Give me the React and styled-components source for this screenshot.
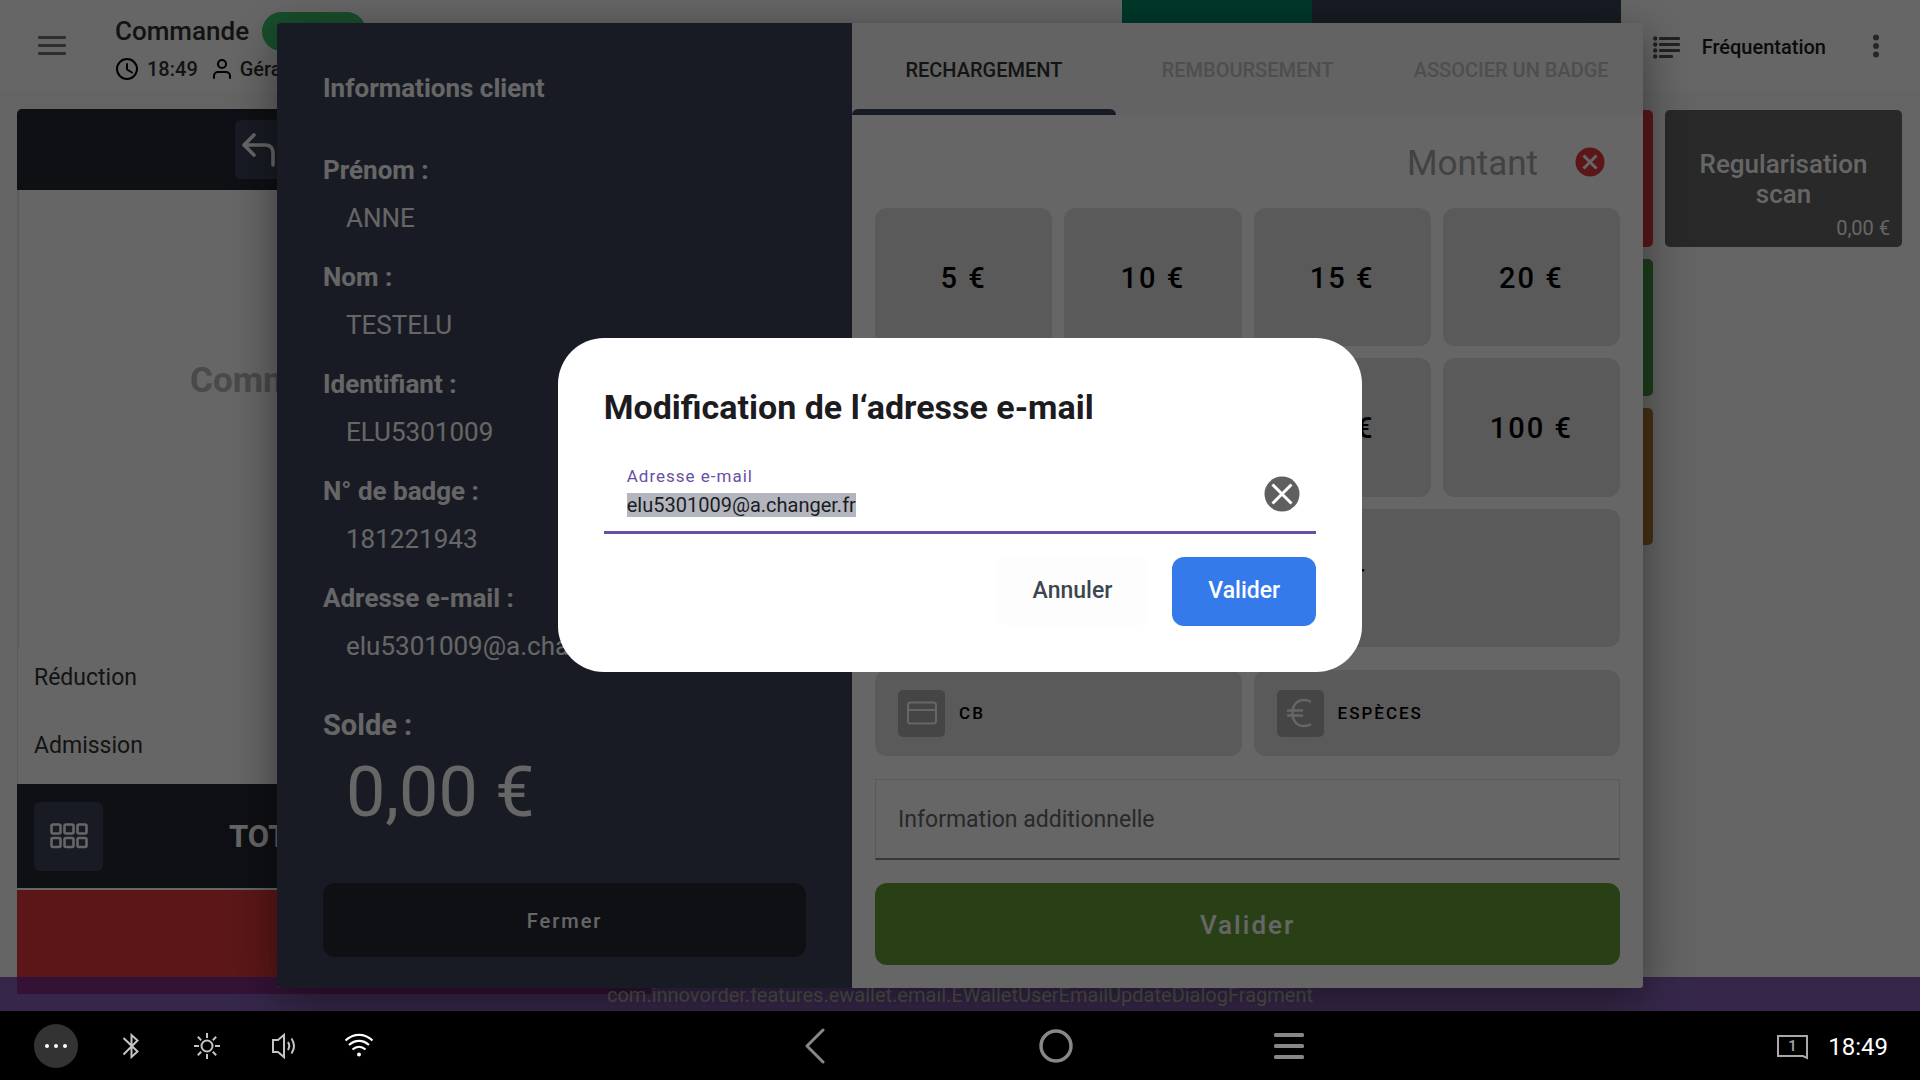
import React from 'react';
import styled, { createGlobalStyle } from 'styled-components';


const GlobalStyle = createGlobalStyle`
  * {
    box-sizing: border-box;
  }

  body {
    margin: 0;
    background-color: black;
    font-family: Roboto, 'Liberation Sans', sans-serif;
  }

  button, input {
    font-family: inherit;
    border: none;
    margin: 0;
    padding: 0;
    background: none;
  }

  svg {
    display: block;
    flex-shrink: 0;
  }
`;

const Page = styled.div`
  min-height: 100vh;
  display: flex;
  flex-direction: column;
`;

const AppArea = styled.div`
  position: relative;
  flex: 1;
  display: flex;
  flex-direction: column;
  overflow: hidden;
  background-color: #f9f9f9;
`;

const Header = styled.header`
  height: 92px;
  display: flex;
  background-color: white;
`;

const MenuButton = styled.button`
  width: 104px;
  display: flex;
  align-items: center;
  padding-left: 38px;
`;

const OrderInfo = styled.div`
  flex: 1;
  padding: 11px 0 0 11px;
  color: #303030;
`;

const OrderTop = styled.div`
  display: flex;
  align-items: center;
  gap: 13px;
  height: 40px;
`;

const OrderTitle = styled.h1`
  margin: 0;
  font-size: 26px;
  font-weight: 500;
`;

const StatusPill = styled.span`
  padding: 0 20px;
  line-height: 39px;
  border-radius: 20px;
  font-size: 18px;
  font-weight: 700;
  color: white;
  background-color: #3cc26d;
`;

const OrderMeta = styled.div`
  display: flex;
  align-items: center;
  gap: 8px;
  height: 36px;
  font-size: 20px;
  font-weight: 500;
`;

const MetaText = styled.span`
  margin-right: 6px;
`;

const HeaderBlock = styled.div`
  width: ${props => props.$width};
  background-color: ${props => props.$color};
`;

const HeaderActions = styled.div`
  display: flex;
  align-items: center;
  padding: 2px 28px 0 32px;
`;

const AttendanceLink = styled.a`
  display: flex;
  align-items: center;
  gap: 22px;
  margin-right: 34px;
  font-size: 20px;
  font-weight: 500;
  color: #1c1c1c;
  text-decoration: none;
`;

const Main = styled.main`
  flex: 1;
  display: flex;
  padding: 17px;
`;

const OrderPanel = styled.section`
  width: 33vw;
  display: flex;
  flex-direction: column;
  border-radius: 5px 5px 0 0;
  overflow: hidden;
  background-color: white;
`;

const OrderBar = styled.div`
  height: 81px;
  display: flex;
  align-items: center;
  padding-left: 218px;
  background-color: #252833;
`;

const SquareButton = styled.button`
  width: ${props => props.$size};
  height: ${props => props.$size};
  display: flex;
  align-items: center;
  justify-content: center;
  border-radius: 6px;
  background-color: #3e445a;
`;

const EmptyOrder = styled.p`
  flex: 1;
  margin: 0;
  padding: 170px 0 0 171px;
  border-left: 2px solid #e4e4e4;
  font-size: 35px;
  line-height: 42px;
  font-weight: 700;
  color: #b8b8b8;
`;

const OrderRow = styled.div`
  height: 68px;
  display: flex;
  align-items: center;
  padding: 0 16px 10px;
  border-left: 1px solid #e4e4e4;
  font-size: 23px;
  color: #333333;
`;

const TotalBar = styled.div`
  height: 104px;
  display: flex;
  align-items: center;
  gap: 126px;
  padding-left: 17px;
  margin-bottom: 2px;
  font-size: 31px;
  font-weight: 700;
  color: white;
  background-color: #252833;
`;

const PayButton = styled.button`
  height: 104px;
  background-color: #e6393c;
`;

const Products = styled.section`
  flex: 1;
  display: grid;
  grid-template-columns: repeat(2, 237px);
  grid-auto-rows: 137px;
  justify-content: end;
  gap: 12px;
  padding: 1px;
`;

const Product = styled.button`
  position: relative;
  grid-column: ${props => props.$column};
  padding: 0 12px;
  border-radius: 5px;
  font-size: 26px;
  line-height: 30px;
  font-weight: 500;
  color: white;
  background-color: ${props => props.$color};
`;

const ProductPrice = styled.span`
  position: absolute;
  right: 12px;
  bottom: 4px;
  font-size: 20px;
  font-weight: 400;
`;

const ScreenName = styled.div`
  position: absolute;
  left: 0;
  right: 0;
  bottom: 0;
  height: 34px;
  line-height: 36px;
  text-align: center;
  font-size: 20px;
  color: #cfcfb8;
  background-color: rgba(94, 44, 162, 0.74);
`;

const Layer = styled.div`
  position: absolute;
  inset: 0;
  display: flex;
  align-items: center;
  justify-content: center;
`;

const Scrim = styled(Layer)`
  padding-bottom: 1px;
  background-color: rgba(0, 0, 0, 0.6);
`;

const Wallet = styled.section`
  align-self: stretch;
  flex: 1;
  display: flex;
  margin: 23px 277px;
  border-radius: 3px;
  overflow: hidden;
  background-color: white;
  box-shadow: 0 12px 48px rgba(0, 0, 0, 0.45);
`;

const ClientPane = styled.div`
  width: 42.1%;
  display: flex;
  flex-direction: column;
  padding: 49px 46px 31px;
  color: white;
  background-color: #3e445a;
`;

const PaneTitle = styled.h2`
  margin: 0 0 23px;
  font-size: 26px;
  line-height: 32px;
  font-weight: 700;
`;

const ClientList = styled.dl`
  margin: 0;
`;

const ClientLabel = styled.dt`
  margin-top: 27px;
  font-size: 26px;
  line-height: 32px;
  font-weight: 700;
`;

const ClientValue = styled.dd`
  margin: 16px 0 0 23px;
  font-size: 26px;
  line-height: 32px;
`;

const BalanceLabel = styled.div`
  margin-top: 45px;
  font-size: 29px;
  line-height: 36px;
  font-weight: 700;
`;

const Balance = styled.div`
  margin: 9px 0 0 23px;
  font-size: 70px;
  line-height: 80px;
`;

const CloseButton = styled.button`
  height: 74px;
  padding-top: 2px;
  margin-top: auto;
  border-radius: 12px;
  font-size: 20px;
  font-weight: 500;
  letter-spacing: 2px;
  color: white;
  background-color: #252833;
`;

const TopUpPane = styled.div`
  flex: 1;
  display: flex;
  flex-direction: column;
`;

const Tabs = styled.div`
  height: 92px;
  display: flex;
  background-color: #f7f7f7;
`;

const Tab = styled.button`
  position: relative;
  flex: 1 1 0;
  padding-top: 2px;
  font-size: 20px;
  font-weight: 500;
  white-space: nowrap;
  color: ${props => props.$active ? '#333333' : '#c4c4c4'};

  &::after {
    content: '';
    display: ${props => props.$active ? 'block' : 'none'};
    position: absolute;
    left: 0;
    right: 0;
    bottom: 0;
    height: 6px;
    border-radius: 6px 6px 0 0;
    background-color: #37445c;
  }
`;

const TopUpBody = styled.div`
  flex: 1;
  display: flex;
  flex-direction: column;
  gap: 23px;
  padding: 0 23px 23px;
`;

const AmountLine = styled.div`
  height: 93px;
  display: flex;
  align-items: center;
  justify-content: flex-end;
  gap: 37px;
  padding-right: 15px;
  margin-bottom: -23px;
  font-size: 35px;
  color: #a6a6a6;
`;

const AmountText = styled.span`
  padding-top: 4px;
`;

const IconButton = styled.button`
  display: flex;
`;

const AmountGrid = styled.div`
  flex: 1;
  display: grid;
  grid-template-columns: repeat(4, 1fr);
  grid-template-rows: repeat(3, 1fr);
  gap: 12px;
`;

const AmountButton = styled.button`
  grid-column: ${props => props.$wide ? '1 / -1' : 'auto'};
  padding-top: 2px;
  border-radius: 12px;
  font-size: ${props => props.$wide ? '26px' : '29px'};
  font-weight: 500;
  letter-spacing: 2px;
  color: black;
  background-color: #e0e0e0;
`;

const PaymentRow = styled.div`
  display: flex;
  gap: 12px;
`;

const PaymentButton = styled.button`
  flex: 1;
  height: 86px;
  display: flex;
  align-items: center;
  gap: 14px;
  padding: 0 23px;
  border-radius: 12px;
  font-size: 17px;
  font-weight: 500;
  letter-spacing: 2px;
  color: black;
  background-color: #e0e0e0;
`;

const PaymentIcon = styled.span`
  width: 47px;
  height: 47px;
  display: flex;
  align-items: center;
  justify-content: center;
  border-radius: 5px;
  background-color: #acacac;
`;

const NoteInput = styled.input`
  height: 81px;
  padding: 0 22px;
  border: 1px solid #e0e0e0;
  border-bottom: 2px solid #8a8a8a;
  border-radius: 0;
  font-size: 23px;

  &::placeholder {
    color: #666666;
    opacity: 1;
  }
`;

const ConfirmButton = styled.button`
  height: 82px;
  padding-top: 2px;
  border-radius: 12px;
  font-size: 26px;
  font-weight: 500;
  letter-spacing: 2px;
  color: white;
  background-color: #68a038;
`;

const Dialog = styled.form`
  width: 41.9vw;
  padding: 46px;
  border-radius: 46px;
  background-color: white;
`;

const DialogTitle = styled.h2`
  margin: 0 0 27px;
  font-size: 34px;
  line-height: 46px;
  font-weight: 700;
  color: #1c1b1f;
`;

const Field = styled.div`
  display: flex;
  align-items: center;
  padding-right: 16px;
  border-bottom: 3px solid #6750a4;
`;

const FieldText = styled.div`
  flex: 1;
  display: flex;
  flex-direction: column;
  gap: 7px;
  padding: 9px 0 14px 23px;
`;

const FieldLabel = styled.label`
  font-size: 17px;
  line-height: 20px;
  letter-spacing: 1px;
  color: #6750a4;
`;

const FieldInput = styled.input`
  height: 24px;
  font-size: 20px;
  line-height: 24px;
  color: #1c1b1f;
  outline: none;

  &::selection {
    color: #1c1b1f;
    background-color: #b3b6be;
  }
`;

const DialogActions = styled.div`
  display: flex;
  justify-content: flex-end;
  gap: 24px;
  margin-top: 23px;
`;

const DialogButton = styled.button`
  height: 69px;
  padding: 0 36px 3px;
  border-radius: 12px;
  font-size: 23px;
  font-weight: 500;
  color: ${props => props.$primary ? 'white' : '#3c4650'};
  background-color: ${props => props.$primary ? '#347aea' : '#fdfdfd'};
`;

const NavBar = styled.footer`
  height: 69px;
  display: flex;
  align-items: center;
  padding: 0 32px 0 34px;
  color: white;
  background-color: black;
`;

const StatusIcons = styled.div`
  display: flex;
  align-items: center;
  gap: 48px;
  margin-right: 22.5vw;
`;

const MoreButton = styled.button`
  width: 44px;
  height: 44px;
  display: flex;
  align-items: center;
  justify-content: center;
  margin-right: -9px;
  border-radius: 50%;
  background-color: #333333;
`;

const NavKeys = styled.nav`
  display: flex;
  align-items: center;
  gap: 201px;
`;

const NavClock = styled.div`
  display: flex;
  align-items: center;
  gap: 20px;
  padding-top: 3px;
  margin-left: auto;
  font-size: 24px;
`;


const MenuIcon = () => (
  <svg width="28" height="20" viewBox="0 0 28 20" fill="#707070">
    <rect y="0" width="28" height="3" rx="1" />
    <rect y="8" width="28" height="3" rx="1" />
    <rect y="16" width="28" height="3" rx="1" />
  </svg>
);

const ClockIcon = () => (
  <svg width="24" height="24" viewBox="0 0 24 24" fill="none" stroke="black" strokeWidth="2" strokeLinecap="round">
    <circle cx="12" cy="12" r="10" />
    <path d="M12 7v5.5l5 3" />
  </svg>
);

const PersonIcon = () => (
  <svg width="20" height="20" viewBox="0 0 20 20" fill="none" stroke="black" strokeWidth="2" strokeLinecap="round">
    <circle cx="10" cy="5" r="4" />
    <path d="M2 19v-2a4 4 0 0 1 4-4h8a4 4 0 0 1 4 4v2" />
  </svg>
);

const ListIcon = () => (
  <svg width="27" height="23" viewBox="0 0 27 23" fill="#565656">
    <circle cx="2.2" cy="2.5" r="2.2" />
    <circle cx="2.2" cy="8.5" r="2.2" />
    <circle cx="2.2" cy="14.5" r="2.2" />
    <circle cx="2.2" cy="20.5" r="2.2" />
    <rect x="6" y="1" width="21" height="3" rx="1" />
    <rect x="6" y="7" width="21" height="3" rx="1" />
    <rect x="6" y="13" width="21" height="3" rx="1" />
    <rect x="6" y="19" width="14" height="3" rx="1" />
  </svg>
);

const DotsIcon = () => (
  <svg width="32" height="26" viewBox="0 0 32 26" fill="#606060">
    <circle cx="16" cy="3.5" r="3" />
    <circle cx="16" cy="12" r="3" />
    <circle cx="16" cy="20.5" r="3" />
  </svg>
);

const UndoIcon = () => (
  <svg width="45" height="40" viewBox="0 0 45 40" fill="none" stroke="white" strokeWidth="3.6" strokeLinecap="round" strokeLinejoin="round">
    <path d="M12 5L2 15l10 10M2 15h21q8 0 8 8v12" />
  </svg>
);

const GridIcon = () => (
  <svg width="38" height="26" viewBox="0 0 38 26" fill="none" stroke="white" strokeWidth="2.6">
    <rect x="1.5" y="1.5" width="9" height="9" rx="1.5" />
    <rect x="14.5" y="1.5" width="9" height="9" rx="1.5" />
    <rect x="27.5" y="1.5" width="9" height="9" rx="1.5" />
    <rect x="1.5" y="15" width="9" height="9" rx="1.5" />
    <rect x="14.5" y="15" width="9" height="9" rx="1.5" />
    <rect x="27.5" y="15" width="9" height="9" rx="1.5" />
  </svg>
);

const ClearAmountIcon = () => (
  <svg width="30" height="30" viewBox="0 0 30 30">
    <circle cx="15" cy="15" r="14.5" fill="#e6393c" />
    <path d="M8.5 8.5l13 13M21.5 8.5l-13 13" stroke="white" strokeWidth="3" />
  </svg>
);

const ClearFieldIcon = () => (
  <svg width="36" height="36" viewBox="0 0 36 36">
    <circle cx="18" cy="18" r="17.5" fill="#5f5f5f" />
    <path d="M8.5 8.5l19 19M27.5 8.5l-19 19" stroke="white" strokeWidth="3" />
  </svg>
);

const CardIcon = () => (
  <svg width="30" height="24" viewBox="0 0 30 24" fill="none" stroke="white" strokeWidth="2">
    <rect x="1" y="1.5" width="28" height="21" rx="2.5" />
    <path d="M1 9h28" />
  </svg>
);

const EuroIcon = () => (
  <svg width="28" height="30" viewBox="0 0 28 30" fill="none" stroke="white" strokeWidth="2.4" strokeLinecap="round">
    <path d="M24 3.5C22 2 20 2 18 2C11 2 6.500 7 6.500 15s4.500 13 11.500 13c2 0 4 0 6-1.500M2 12.500h14M2 17.500h14" />
  </svg>
);

const MoreIcon = () => (
  <svg width="24" height="6" viewBox="0 0 24 6" fill="white">
    <circle cx="3" cy="3" r="2" />
    <circle cx="12" cy="3" r="2" />
    <circle cx="21" cy="3" r="2" />
  </svg>
);

const BluetoothIcon = () => (
  <svg width="28" height="28" viewBox="0 0 28 28" fill="none" stroke="#c4c4c4" strokeWidth="2">
    <path d="M6.500 6l14 13.500-6 5.500V3l6 5.500L6.500 22.500" />
  </svg>
);

const SunIcon = () => (
  <svg width="28" height="28" viewBox="0 0 28 28" fill="none" stroke="#c4c4c4" strokeWidth="2">
    <circle cx="14" cy="14" r="5.500" />
    <path d="M14 1v5M14 22v5M1 14h5M22 14h5M4.800 4.800l3.400 3.400M19.800 19.800l3.400 3.400M4.800 23.200l3.400-3.400M19.800 8.200l3.400-3.400" />
  </svg>
);

const VolumeIcon = () => (
  <svg width="28" height="28" viewBox="0 0 28 28" fill="none" stroke="#c4c4c4" strokeWidth="2">
    <path d="M4 8h5l6-5v22l-6-5H4z" />
    <path d="M19 10q2.500 4 0 8M22.500 6.500q5 7.500 0 15" />
  </svg>
);

const WifiIcon = () => (
  <svg width="28" height="28" viewBox="0 0 28 28" fill="none" stroke="white" strokeWidth="2.200">
    <path d="M.5 8.500c8-7.500 19-7.500 27 0M4 13c6-5.500 14-5.500 20 0M7.500 17.500c4-3.500 9-3.500 13 0" />
    <circle cx="14" cy="22.500" r="2" fill="white" stroke="none" />
  </svg>
);

const BackIcon = () => (
  <svg width="33" height="36" viewBox="0 0 33 36" fill="none" stroke="#888888" strokeWidth="3" strokeLinecap="round" strokeLinejoin="round">
    <path d="M18 2L2 18l16 16" />
  </svg>
);

const HomeIcon = () => (
  <svg width="34" height="34" viewBox="0 0 34 34" fill="none" stroke="#888888" strokeWidth="3.500">
    <circle cx="17" cy="17" r="15" />
  </svg>
);

const RecentsIcon = () => (
  <svg width="30" height="26" viewBox="0 0 30 26" fill="#888888">
    <rect y="0" width="30" height="4" rx="1.500" />
    <rect y="11" width="30" height="4" rx="1.500" />
    <rect y="22" width="30" height="4" rx="1.500" />
  </svg>
);

const MessageIcon = () => (
  <svg width="31" height="26" viewBox="0 0 31 26" fill="none" stroke="#a8a8a8" strokeWidth="2">
    <path d="M1 2h29v22l-4-2H1z" />
    <text x="15.5" y="17" textAnchor="middle" fontSize="15" fontWeight="500" fill="#a8a8a8" stroke="none">1</text>
  </svg>
);


const client = [
  { label: 'Prénom :', value: 'ANNE' },
  { label: 'Nom :', value: 'TESTELU' },
  { label: 'Identifiant :', value: 'ELU5301009' },
  { label: 'N° de badge :', value: '181221943' },
  { label: 'Adresse e-mail :', value: 'elu5301009@a.changer.fr' }
];

const amounts = ['5 €', '10 €', '15 €', '20 €', '25 €', '30 €', '50 €', '100 €'];


class App extends React.Component {
  constructor(props) {
    super(props);
    this.state = {
      email: 'elu5301009@a.changer.fr',
      note: ''
    }
    this.emailInput = React.createRef();
  }

  componentDidMount() {
    this.emailInput.current.focus();
    this.emailInput.current.select();
  }

  handleInputChange = event => {
    this.setState({ [event.target.name]: event.target.value });
  };

  clearEmail = () => {
    this.setState({ email: '' });
  };

  submit = event => {
    event.preventDefault();
  };


  render() {
    return(
      <Page>
        <GlobalStyle />
        <AppArea>
          <Header>
            <MenuButton aria-label='Menu'><MenuIcon /></MenuButton>
            <OrderInfo>
              <OrderTop>
                <OrderTitle>Commande</OrderTitle>
                <StatusPill>En ligne</StatusPill>
              </OrderTop>
              <OrderMeta>
                <ClockIcon />
                <MetaText>18:49</MetaText>
                <PersonIcon />
                <MetaText>Gérant</MetaText>
              </OrderMeta>
            </OrderInfo>
            <HeaderBlock $width='190px' $color='#008c69' />
            <HeaderBlock $width='309px' $color='#3e445a' />
            <HeaderActions>
              <AttendanceLink href='#'><ListIcon />Fréquentation</AttendanceLink>
              <IconButton aria-label='Plus'><DotsIcon /></IconButton>
            </HeaderActions>
          </Header>

          <Main>
            <OrderPanel>
              <OrderBar>
                <SquareButton $size='59px' aria-label='Retour'><UndoIcon /></SquareButton>
              </OrderBar>
              <EmptyOrder>Commande vide</EmptyOrder>
              <OrderRow>Réduction</OrderRow>
              <OrderRow>Admission</OrderRow>
              <TotalBar>
                <SquareButton $size='69px' aria-label='Grille'><GridIcon /></SquareButton>
                TOTAL
              </TotalBar>
              <PayButton aria-label='Payer' />
            </OrderPanel>
            <Products>
              <Product $column={1} $color='#e23c3c' aria-label='Produit rouge' />
              <Product $column={2} $color='#666666'>
                Regularisation scan
                <ProductPrice>0,00 €</ProductPrice>
              </Product>
              <Product $column={1} $color='#439a48' aria-label='Produit vert' />
              <Product $column={1} $color='#ae7d38' aria-label='Produit orange' />
            </Products>
          </Main>

          <ScreenName>com.innovorder.features.ewallet.email.EWalletUserEmailUpdateDialogFragment</ScreenName>

          <Layer>
            <Wallet>
              <ClientPane>
                <PaneTitle>Informations client</PaneTitle>
                <ClientList>
                  {client.map(item => (
                    <React.Fragment key={item.label}>
                      <ClientLabel>{item.label}</ClientLabel>
                      <ClientValue>{item.value}</ClientValue>
                    </React.Fragment>
                  ))}
                </ClientList>
                <BalanceLabel>Solde :</BalanceLabel>
                <Balance>0,00 €</Balance>
                <CloseButton>Fermer</CloseButton>
              </ClientPane>
              <TopUpPane>
                <Tabs role='tablist'>
                  <Tab role='tab' aria-selected='true' $active>RECHARGEMENT</Tab>
                  <Tab role='tab' aria-selected='false'>REMBOURSEMENT</Tab>
                  <Tab role='tab' aria-selected='false'>ASSOCIER UN BADGE</Tab>
                </Tabs>
                <TopUpBody>
                  <AmountLine>
                    <AmountText>Montant</AmountText>
                    <IconButton aria-label='Effacer le montant'><ClearAmountIcon /></IconButton>
                  </AmountLine>
                  <AmountGrid>
                    {amounts.map(amount => (
                      <AmountButton key={amount}>{amount}</AmountButton>
                    ))}
                    <AmountButton $wide>AUTRE MONTANT</AmountButton>
                  </AmountGrid>
                  <PaymentRow>
                    <PaymentButton><PaymentIcon><CardIcon /></PaymentIcon>CB</PaymentButton>
                    <PaymentButton><PaymentIcon><EuroIcon /></PaymentIcon>ESPÈCES</PaymentButton>
                  </PaymentRow>
                  <NoteInput
                    type='text'
                    name='note'
                    aria-label='Information additionnelle'
                    placeholder='Information additionnelle'
                    value={this.state.note}
                    onChange={this.handleInputChange}
                  />
                  <ConfirmButton>Valider</ConfirmButton>
                </TopUpBody>
              </TopUpPane>
            </Wallet>
          </Layer>

          <Scrim>
            <Dialog onSubmit={this.submit}>
              <DialogTitle>Modification de l‘adresse e-mail</DialogTitle>
              <Field>
                <FieldText>
                  <FieldLabel htmlFor='email'>Adresse e-mail</FieldLabel>
                  <FieldInput
                    id='email'
                    ref={this.emailInput}
                    type='text'
                    name='email'
                    value={this.state.email}
                    onChange={this.handleInputChange}
                    autoComplete='off'
                    spellCheck={false}
                  />
                </FieldText>
                <IconButton type='button' aria-label='Effacer' onClick={this.clearEmail}><ClearFieldIcon /></IconButton>
              </Field>
              <DialogActions>
                <DialogButton type='button'>Annuler</DialogButton>
                <DialogButton type='submit' $primary>Valider</DialogButton>
              </DialogActions>
            </Dialog>
          </Scrim>
        </AppArea>

        <NavBar>
          <StatusIcons>
            <MoreButton aria-label='Plus'><MoreIcon /></MoreButton>
            <BluetoothIcon />
            <SunIcon />
            <VolumeIcon />
            <WifiIcon />
          </StatusIcons>
          <NavKeys>
            <IconButton aria-label='Précédent'><BackIcon /></IconButton>
            <IconButton aria-label='Accueil'><HomeIcon /></IconButton>
            <IconButton aria-label='Récents'><RecentsIcon /></IconButton>
          </NavKeys>
          <NavClock>
            <MessageIcon />
            18:49
          </NavClock>
        </NavBar>
      </Page>
    )
  }
}

export default App;
